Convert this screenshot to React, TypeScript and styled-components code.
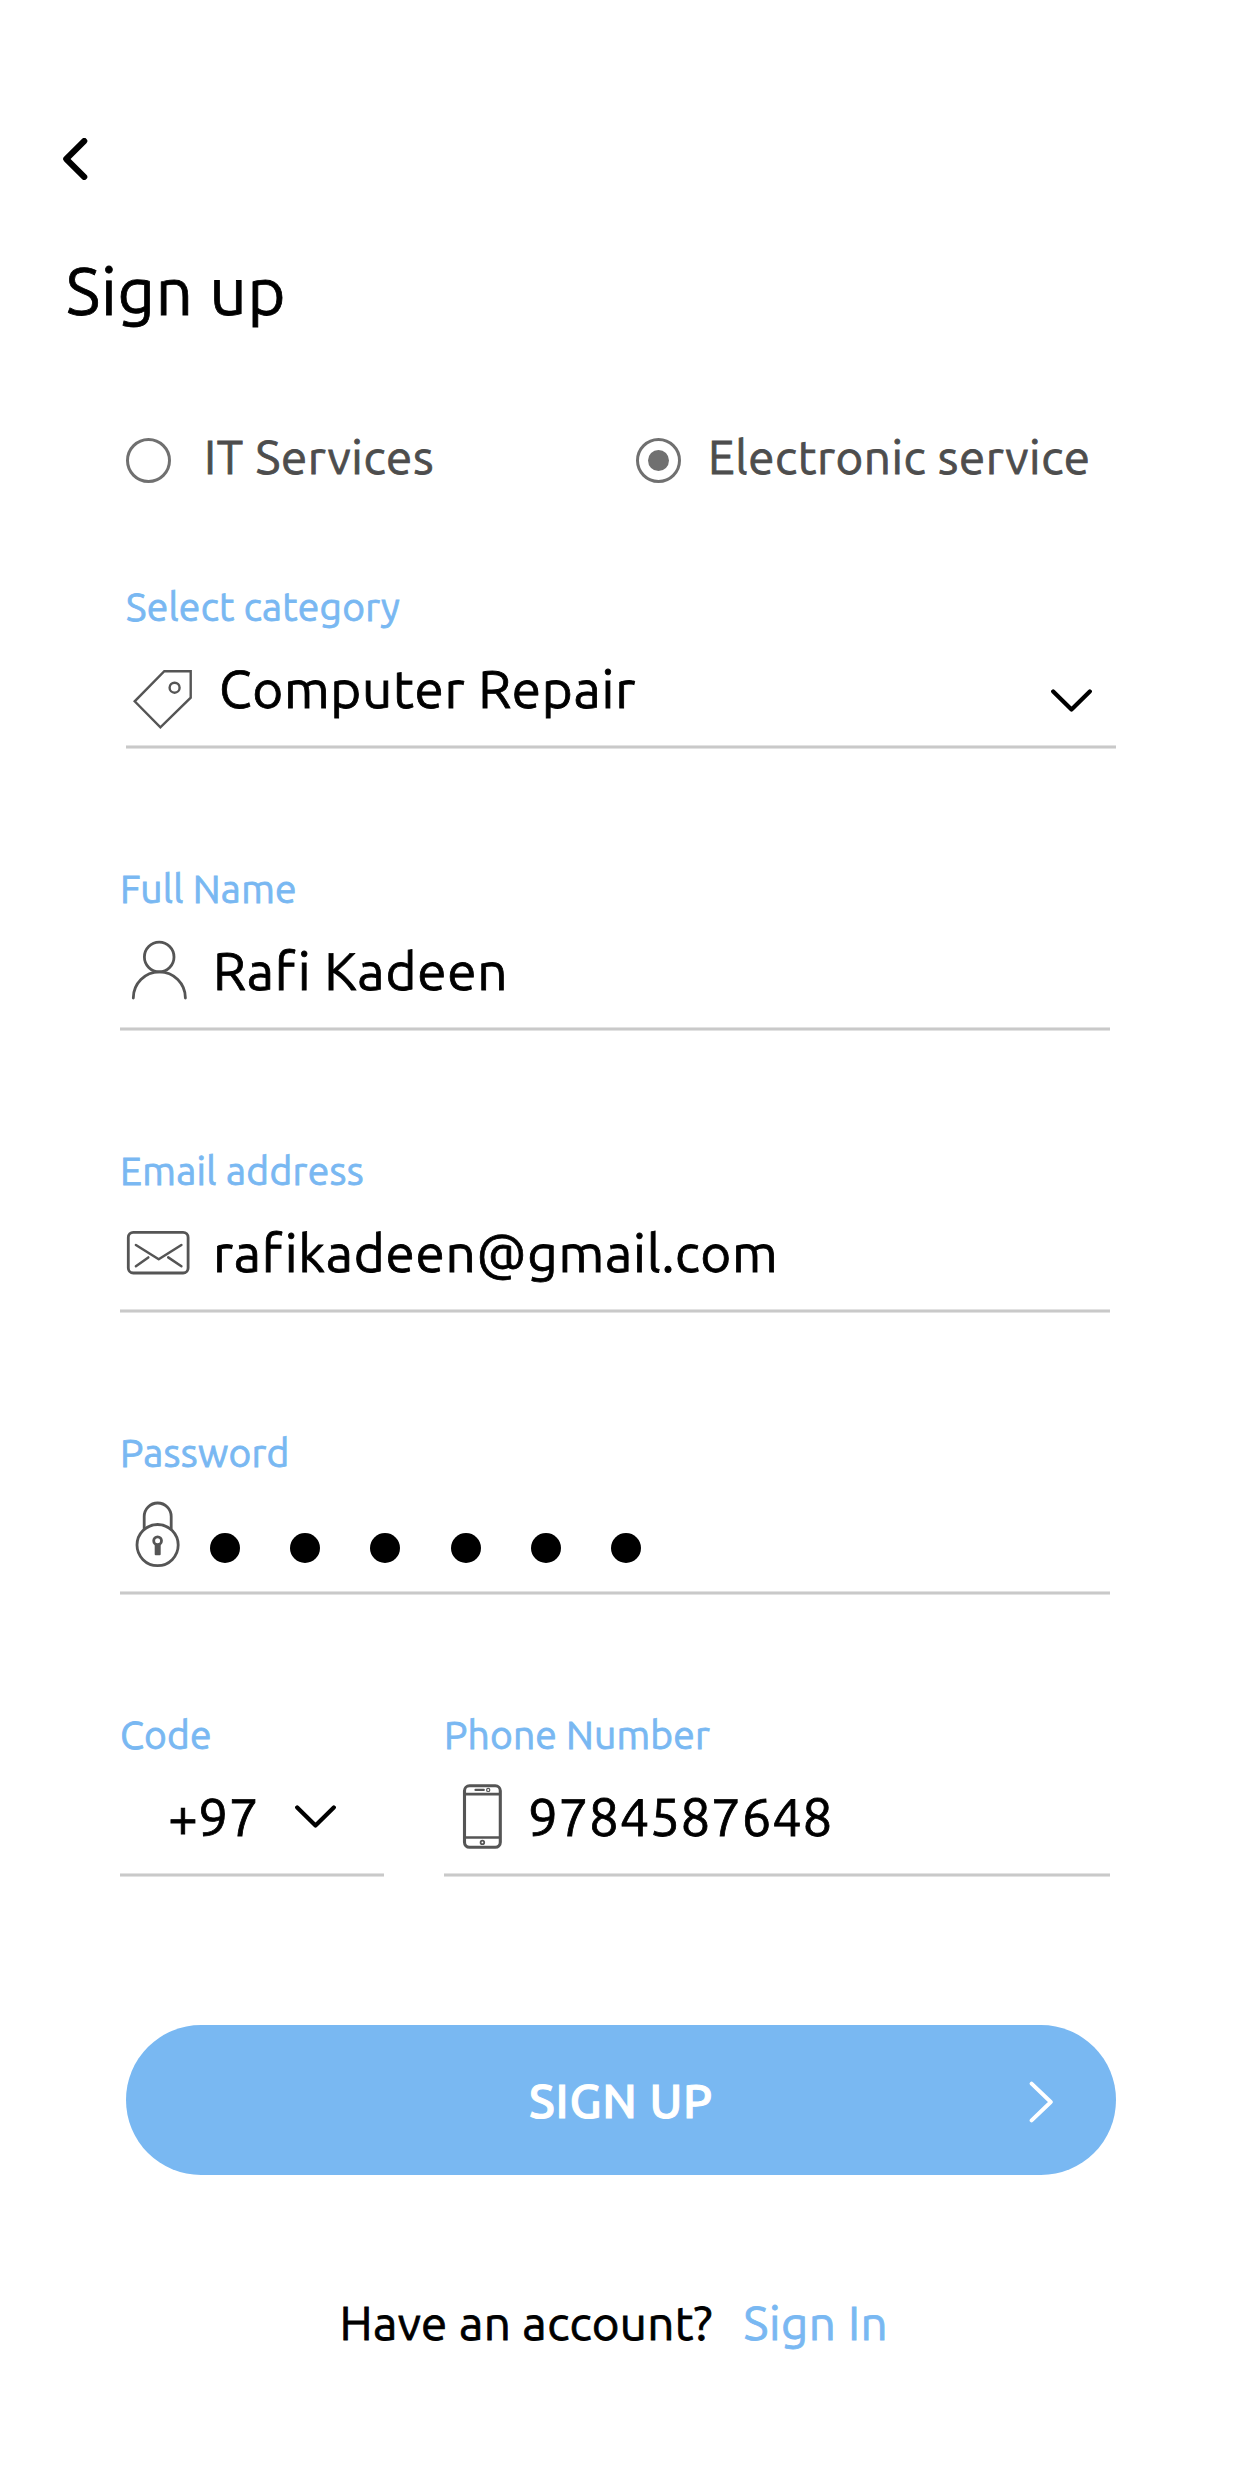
import React from 'react';
import styled, { createGlobalStyle } from 'styled-components';

const BLUE = '#79b8f2';
const ICON = '#555555';

const GlobalStyle = createGlobalStyle`
  * { box-sizing: border-box; }
  body {
    margin: 0;
    background: #ffffff;
    color: #000000;
    font-family: Ubuntu, "Ubuntu Sans", "Noto Sans", sans-serif;
    -webkit-text-stroke: 0.8px currentColor;
  }
`;

const Screen = styled.main`
  width: 1242px;
  height: 2487px;
  padding-top: 138px;
  background: #ffffff;
  overflow: hidden;
`;

const BackButton = styled.button`
  display: block;
  margin: 0 0 0 62px;
  padding: 0;
  border: 0;
  background: none;
  svg { display: block; }
`;

const Title = styled.h1`
  margin: 71px 0 0 66px;
  font-size: 65px;
  font-weight: 400;
  line-height: 80px;
  letter-spacing: 0.86px;
`;

const Options = styled.div`
  display: grid;
  grid-template-columns: 510px auto;
  margin: 96px 0 0 126px;
`;

const Option = styled.label<{ $gap: number; $spacing: number }>`
  display: flex;
  gap: ${p => p.$gap}px;
  color: #4d4d4d;
  font-size: 47.5px;
  line-height: 60px;
  letter-spacing: ${p => p.$spacing}px;
  white-space: nowrap;
`;

const Radio = styled.span`
  display: grid;
  place-items: center;
  width: 45px;
  height: 45px;
  margin-top: 11px;
  border: 3px solid #707070;
  border-radius: 50%;
`;

const RadioDot = styled.span`
  width: 21px;
  height: 21px;
  border-radius: 50%;
  background: #707070;
`;

const Form = styled.form`
  display: flex;
  flex-direction: column;
  gap: 116px;
  margin: 96px 0 0 120px;
`;

const FieldPair = styled.div`
  display: grid;
  grid-template-columns: 264px 666px;
  column-gap: 60px;
  width: 990px;
`;

const FieldBox = styled.div<{ $shift?: number }>`
  width: 100%;
  max-width: 990px;
  height: 166px;
  margin-left: ${p => p.$shift ?? 0}px;
`;

const FieldLabel = styled.div<{ $spacing: number }>`
  color: ${BLUE};
  font-size: 39px;
  line-height: 48px;
  letter-spacing: ${p => p.$spacing}px;
`;

const FieldRow = styled.div<{ $left?: number; $right?: number }>`
  display: flex;
  align-items: flex-start;
  height: 114px;
  padding: 0 ${p => p.$right ?? 0}px 0 ${p => p.$left ?? 0}px;
`;

const Underline = styled.div`
  height: 4px;
  background: #c9c9c9;
  border: solid #e2e2e2;
  border-width: 1px 0;
`;

const IconSlot = styled.span<{ $width?: number }>`
  flex: none;
  width: ${p => p.$width ?? 93}px;
  height: 114px;
  svg { display: block; }
`;

const Value = styled.span<{ $spacing: number }>`
  flex: 1;
  padding-top: 23px;
  font-size: 53px;
  line-height: 70px;
  letter-spacing: ${p => p.$spacing}px;
  white-space: nowrap;
`;

const Drop = styled.span<{ $top: number }>`
  flex: none;
  margin-top: ${p => p.$top}px;
  svg { display: block; }
`;

const Dots = styled.span`
  display: flex;
  gap: 50.2px;
  padding-top: 56px;
`;

const Dot = styled.span`
  width: 30px;
  height: 30px;
  border-radius: 50%;
  background: #000000;
`;

const Submit = styled.button`
  display: grid;
  grid-template-columns: 1fr auto 1fr;
  align-items: center;
  width: 990px;
  height: 150px;
  margin: 148px 0 0 126px;
  padding: 0 62px;
  border: 0;
  border-radius: 75px;
  background: ${BLUE};
  color: #ffffff;
  font-family: inherit;
  font-size: 47.5px;
  font-weight: 500;
  line-height: 60px;
  letter-spacing: 0.75px;
  -webkit-text-stroke: 1.1px currentColor;
  svg { display: block; justify-self: end; margin-top: 3px; }
`;

const SubmitText = styled.span`
  grid-column: 2;
  padding-top: 2px;
`;

const Footer = styled.p`
  display: flex;
  gap: 31px;
  margin: 118px 0 0 339.5px;
  font-size: 47.5px;
  line-height: 60px;
  letter-spacing: 0.35px;
`;

const SignIn = styled.a`
  color: ${BLUE};
  letter-spacing: 0.52px;
`;

const ChevronDown = () => (
  <svg width="41" height="24" viewBox="0 0 41 24" fill="none" stroke="#000" strokeWidth="4.2" strokeLinecap="round" strokeLinejoin="round">
    <path d="M2.2 2.4 20.5 20.6 38.8 2.4" />
  </svg>
);

const RowIcon = ({ children, width = 2.8 }: { children: React.ReactNode; width?: number }) => (
  <svg width="80" height="114" viewBox="0 0 80 114" fill="none" stroke={ICON} strokeWidth={width}>
    {children}
  </svg>
);

const TagIcon = () => (
  <RowIcon width={2.4}>
    <path d="M38.3 40.2H64.7V66.7L34.4 96.3 8.7 70.3Z" />
    <circle cx="48.6" cy="56.7" r="5" />
  </RowIcon>
);

const PersonIcon = () => (
  <RowIcon>
    <circle cx="39.2" cy="44" r="14.8" />
    <path d="M13.3 85A26 26 0 0 1 65.4 85" strokeLinecap="round" />
  </RowIcon>
);

const MailIcon = () => (
  <RowIcon>
    <rect x="8.3" y="37.4" width="59.8" height="40.6" rx="5" />
    <path d="M15.9 50 38.7 64.3 61.4 50M15.9 71.2 28.3 62.4M48.2 62.4 61.4 71.2" strokeWidth="2.5" strokeLinecap="round" strokeLinejoin="round" />
  </RowIcon>
);

const LockIcon = () => (
  <RowIcon>
    <circle cx="37.6" cy="68.1" r="20.6" />
    <path d="M24.2 52.5V39.5a13.5 13.5 0 0 1 27 0V52.5" />
    <circle cx="37.6" cy="63.7" r="3.9" />
    <rect x="34.7" y="67" width="6" height="11.3" rx="1" fill={ICON} stroke="none" />
  </RowIcon>
);

const PhoneIcon = () => (
  <RowIcon width={2.6}>
    <rect x="20.5" y="26.8" width="35.8" height="61.5" rx="5" strokeWidth="3.1" />
    <path d="M20.5 35.1H56.3M20.5 78.5H56.3" />
    <path d="M31.5 30.9H39.8" strokeLinecap="round" strokeWidth="2.2" />
    <circle cx="44.2" cy="30.9" r="1.6" strokeWidth="1.2" />
    <circle cx="38.4" cy="83.4" r="1.8" strokeWidth="1.8" />
  </RowIcon>
);

interface FieldProps {
  label: string;
  spacing: number;
  shift?: number;
  left?: number;
  right?: number;
  children: React.ReactNode;
}

const Field = ({ label, spacing, shift, left, right, children }: FieldProps) => (
  <FieldBox $shift={shift}>
    <FieldLabel $spacing={spacing}>{label}</FieldLabel>
    <FieldRow $left={left} $right={right}>{children}</FieldRow>
    <Underline />
  </FieldBox>
);

export default function App() {
  return (
    <Screen>
      <GlobalStyle />
      <BackButton type="button" aria-label="Back">
        <svg width="26" height="42" viewBox="0 0 26 42" fill="none" stroke="#000" strokeWidth="6" strokeLinecap="round" strokeLinejoin="round">
          <path d="M22.3 3 4.2 21 22.3 39" />
        </svg>
      </BackButton>
      <Title>Sign up</Title>
      <Options>
        <Option $gap={33} $spacing={0.65}><Radio />IT Services</Option>
        <Option $gap={27} $spacing={0.57}><Radio><RadioDot /></Radio>Electronic service</Option>
      </Options>
      <Form>
        <Field label="Select category" spacing={0.23} shift={6} right={24.5}>
          <IconSlot><TagIcon /></IconSlot>
          <Value $spacing={0.73}>Computer Repair</Value>
          <Drop $top={58}><ChevronDown /></Drop>
        </Field>
        <Field label="Full Name" spacing={0.24}>
          <IconSlot><PersonIcon /></IconSlot>
          <Value $spacing={0.8}>Rafi Kadeen</Value>
        </Field>
        <Field label="Email address" spacing={0.3}>
          <IconSlot><MailIcon /></IconSlot>
          <Value $spacing={0.75}>rafikadeen@gmail.com</Value>
        </Field>
        <Field label="Password" spacing={0.26}>
          <IconSlot $width={90}><LockIcon /></IconSlot>
          <Dots>{[0, 1, 2, 3, 4, 5].map(i => <Dot key={i} />)}</Dots>
        </Field>
        <FieldPair>
          <Field label="Code" spacing={0.17} left={48} right={48.5}>
            <Value $spacing={0.46}>+97</Value>
            <Drop $top={46}><ChevronDown /></Drop>
          </Field>
          <Field label="Phone Number" spacing={0.16}>
            <IconSlot $width={84}><PhoneIcon /></IconSlot>
            <Value $spacing={0.6}>9784587648</Value>
          </Field>
        </FieldPair>
      </Form>
      <Submit type="button">
        <SubmitText>SIGN UP</SubmitText>
        <svg width="25" height="42" viewBox="0 0 25 42" fill="none" stroke="#fff" strokeWidth="3.9" strokeLinecap="round" strokeLinejoin="round">
          <path d="M2.6 2.6 21.8 21 2.6 39.4" />
        </svg>
      </Submit>
      <Footer>
        <span>Have an account?</span>
        <SignIn>Sign In</SignIn>
      </Footer>
    </Screen>
  );
}
